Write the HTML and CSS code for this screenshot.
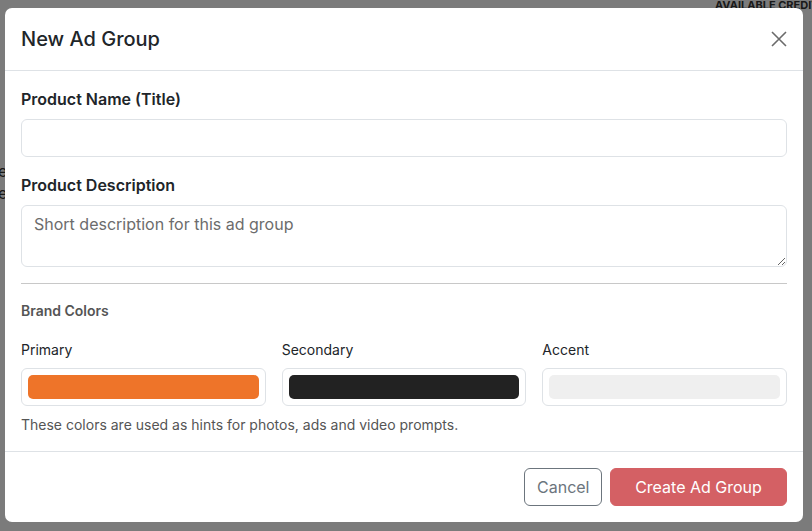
FILE: index.html
```html
<!DOCTYPE html>
<html lang="en">
<head>
<meta charset="utf-8">
<title>New Ad Group</title>
<link rel="stylesheet" href="styles.css">
</head>
<body>
<div class="page">
  <div class="page-top">
    <span class="credits">AVAILABLE CREDITS</span>
  </div>
  <div class="page-side">
    <span class="side-text">e</span>
    <span class="side-text">e</span>
  </div>
</div>
<div class="backdrop">
  <div class="modal">
    <div class="modal-header">
      <h1 class="modal-title">New Ad Group</h1>
      <button class="btn-close" aria-label="Close">
        <svg width="16" height="16" viewBox="0 0 16 16"><path d="M1 1L15 15M15 1L1 15" stroke="#6b6b6b" stroke-width="1.6" fill="none"/></svg>
      </button>
    </div>
    <div class="modal-body">
      <label class="field-label">Product Name (Title)</label>
      <input class="form-control" type="text">
      <label class="field-label">Product Description</label>
      <textarea class="form-control textarea" rows="2" placeholder="Short description for this ad group"></textarea>
      <hr class="divider">
      <div class="section-title">Brand Colors</div>
      <div class="color-grid">
        <div class="color-col">
          <div class="color-label">Primary</div>
          <div class="color-box"><div class="swatch swatch-primary"></div></div>
        </div>
        <div class="color-col">
          <div class="color-label">Secondary</div>
          <div class="color-box"><div class="swatch swatch-secondary"></div></div>
        </div>
        <div class="color-col">
          <div class="color-label">Accent</div>
          <div class="color-box"><div class="swatch swatch-accent"></div></div>
        </div>
      </div>
      <div class="form-text">These colors are used as hints for photos, ads and video prompts.</div>
    </div>
    <div class="modal-footer">
      <button class="btn btn-cancel">Cancel</button>
      <button class="btn btn-create">Create Ad Group</button>
    </div>
  </div>
</div>
</body>
</html>
```

FILE: styles.css
```css
* { box-sizing: border-box; }
html, body { margin: 0; padding: 0; }
body {
  width: 812px;
  height: 531px;
  overflow: hidden;
  font-family: Inter, "Noto Sans", sans-serif;
  color: #212529;
  background: #f6f6f6;
  position: relative;
}
.page { height: 531px; }
.page-top {
  height: 20px;
  display: flex;
  justify-content: flex-end;
}
.credits {
  font-size: 11px;
  font-weight: 700;
  color: #333;
  letter-spacing: 0;
  line-height: 10px;
  width: 97px;
  white-space: nowrap;
  overflow: hidden;
}
.page-side {
  display: flex;
  flex-direction: column;
  padding-top: 140px;
  font-size: 16px;
  color: #333;
}
.side-text { line-height: 22px; margin-left: -2px; }
.backdrop {
  position: absolute;
  inset: 0;
  background: rgba(0, 0, 0, 0.5);
  padding: 8px 0 0 5px;
}
.modal {
  width: 798px;
  background: #fff;
  border-radius: 7px;
  overflow: hidden;
}
.modal-header {
  display: flex;
  align-items: center;
  justify-content: space-between;
  padding: 16px 16px;
  border-bottom: 1px solid #dee2e6;
}
.modal-title {
  margin: 0;
  font-size: 20px;
  font-weight: 500;
  line-height: 30px;
  color: #212529;
}
.btn-close {
  border: 0;
  background: none;
  padding: 0;
  width: 16px;
  height: 16px;
  display: flex;
}
.modal-body {
  padding: 16px 16px;
  display: flex;
  flex-direction: column;
}
.field-label {
  font-size: 16px;
  font-weight: 600;
  line-height: 24px;
  margin-bottom: 8px;
}
.form-control {
  display: block;
  width: 100%;
  height: 38px;
  border: 1px solid #dee2e6;
  border-radius: 6px;
  padding: 6px 12px;
  font-family: inherit;
  font-size: 16px;
  line-height: 24px;
  color: #212529;
  margin: 0 0 16px;
  background: #fff;
}
.textarea {
  height: 62px;
  resize: vertical;
  margin-bottom: 0;
}
.textarea::placeholder { color: #6c6c6c; }
.divider {
  border: 0;
  border-top: 1px solid #c8c8c8;
  margin: 16px 0;
  width: 100%;
}
.section-title {
  font-size: 14px;
  font-weight: 600;
  line-height: 21px;
  color: #555;
  margin-bottom: 18px;
}
.color-grid {
  display: grid;
  grid-template-columns: 1fr 1fr 1fr;
  gap: 16px;
}
.color-label {
  font-size: 14px;
  line-height: 21px;
  color: #212529;
  margin-bottom: 8px;
}
.color-box {
  height: 38px;
  border: 1px solid #dee2e6;
  border-radius: 6px;
  padding: 6px;
}
.swatch {
  height: 24px;
  border-radius: 5px;
}
.swatch-primary { background: #ee7429; }
.swatch-secondary { background: #222222; }
.swatch-accent { background: #efefef; }
.form-text {
  margin-top: 8px;
  font-size: 14px;
  line-height: 21px;
  color: #555;
}
.modal-footer {
  border-top: 1px solid #dee2e6;
  padding: 16px;
  display: flex;
  justify-content: flex-end;
  gap: 8px;
}
.btn {
  font-family: inherit;
  font-size: 16px;
  line-height: 24px;
  height: 38px;
  padding: 6px 12px;
  border-radius: 6px;
  cursor: pointer;
}
.btn-cancel {
  background: #fff;
  color: #6c757d;
  border: 1px solid #6c757d;
  width: 78px;
}
.btn-create {
  background: #d46064;
  color: #fff;
  border: 1px solid #d46064;
  width: 177px;
}
```
